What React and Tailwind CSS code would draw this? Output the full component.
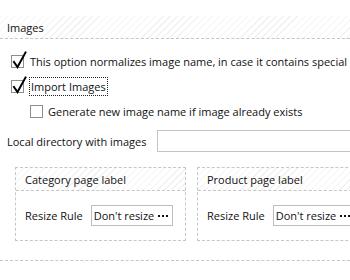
import React from "react";

const hatch =
  "bg-[repeating-linear-gradient(135deg,#f2f2f2_0px,#f2f2f2_1px,#ffffff_1px,#ffffff_5px)]";

function Check({ checked }) {
  return (
    <span className="relative inline-block w-[13px] h-[13px] border border-[#8e8e8e] bg-white shrink-0">
      {checked && (
        <svg
          className="absolute left-[0px] top-[-5px]"
          width="16"
          height="18"
          viewBox="0 0 16 18"
        >
          <path
            d="M2 11 L5.5 16 L13.5 1.5"
            fill="none"
            stroke="#000"
            strokeWidth="2"
            strokeLinecap="square"
          />
        </svg>
      )}
    </span>
  );
}

function Dots() {
  return (
    <span className="ml-[4px] flex items-center gap-[2px]">
      <span className="w-[2px] h-[2px] bg-[#111]" />
      <span className="w-[2px] h-[2px] bg-[#111]" />
      <span className="w-[2px] h-[2px] bg-[#111]" />
    </span>
  );
}

function Group({ title }) {
  return (
    <div className="w-[171px] shrink-0 border border-dashed border-[#c6c6c6] h-[74px]">
      <div className={`h-[23px] border-b border-dashed border-[#c6c6c6] flex items-center pl-[9px] ${hatch}`}>
        {title}
      </div>
      <div className="pt-[14px] pl-[9px] flex items-center">
        <span>Resize Rule</span>
        <div className="ml-[8px] h-[21px] w-[82px] border border-[#bdbdbd] flex items-center pl-[2px] whitespace-nowrap overflow-hidden">
          Don't resize <Dots />
        </div>
      </div>
    </div>
  );
}

export default function App() {
  return (
    <div className="w-[350px] h-[280px] bg-white overflow-hidden text-[11px] leading-none text-[#111] font-['Open_Sans',sans-serif]">
      <div className={`mt-[16px] h-[23px] border-b border-dashed border-[#c6c6c6] flex items-center pl-[7px] ${hatch}`}>
        Images
      </div>
      <div className="mt-[10px] pl-[11px]">
        <div className="h-[25px] flex items-center whitespace-nowrap">
          <Check checked />
          <span className="ml-[6px]">This option normalizes image name, in case it contains special</span>
        </div>
        <div className="h-[25px] flex items-center">
          <Check checked />
          <span className="ml-[5px] border border-dotted border-[#222] px-[1px] py-[3px]">Import Images</span>
        </div>
        <div className="h-[24px] flex items-center pl-[19px]">
          <Check />
          <span className="ml-[5px]">Generate new image name if image already exists</span>
        </div>
      </div>
      <div className="mt-[6px] h-[24px] flex items-center pl-[7px]">
        <span className="w-[150px] shrink-0">Local directory with images</span>
        <div className="h-[22px] flex-1 border border-[#c4c4c4] mr-[-5px]" />
      </div>
      <div className="border-b border-dashed border-[#c6c6c6] pb-[19px]">
        <div className="mt-[14px] pl-[15px] flex gap-[11px]">
          <Group title="Category page label" />
          <Group title="Product page label" />
        </div>
      </div>
    </div>
  );
}
